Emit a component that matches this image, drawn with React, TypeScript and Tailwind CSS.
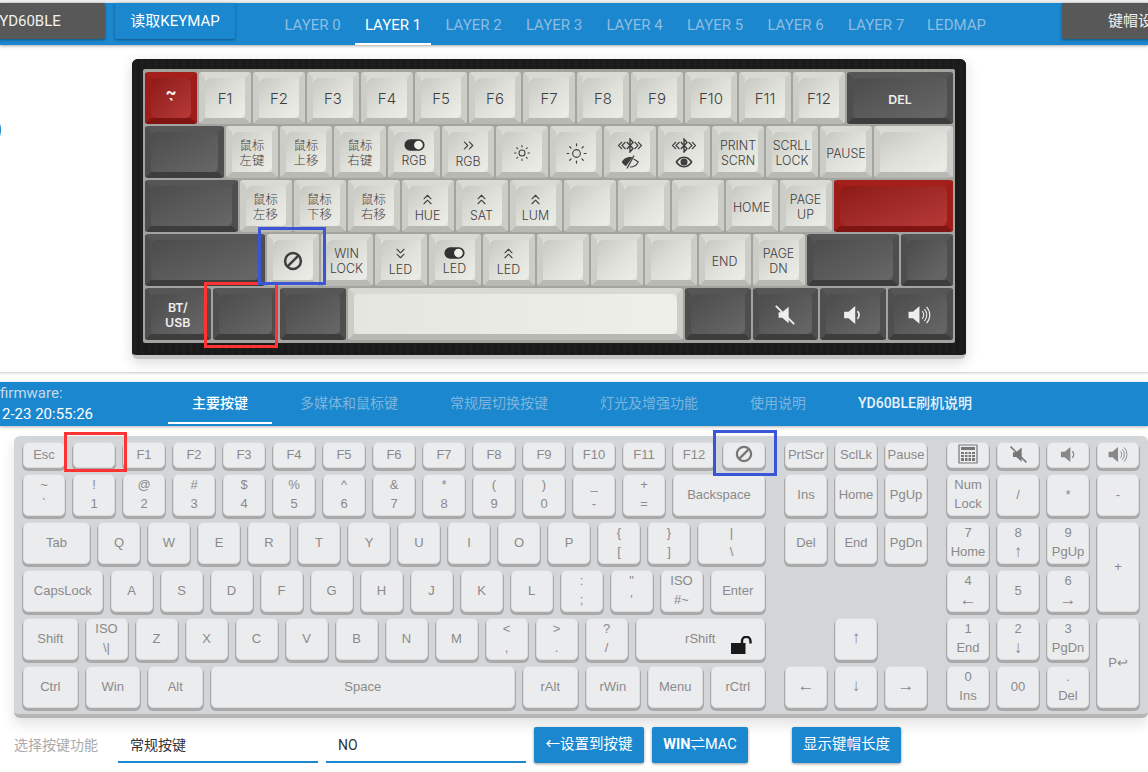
import { ChevronsDown, ChevronsRight, ChevronsUp, Sun } from "lucide-react"
import type { ReactNode } from "react"

const uiFont = "font-['Roboto','Noto_Sans_CJK_SC',sans-serif]"

function BanIcon({ className }: { className: string }) {
  return (
    <svg viewBox="0 0 24 24" fill="none" stroke="currentColor" strokeWidth="3" className={className}>
      <circle cx="12" cy="12" r="9.5" />
      <path d="M5.5 18.5 18.5 5.5" />
    </svg>
  )
}

function ToggleIcon() {
  return (
    <svg viewBox="0 0 24 14" className="h-[14px] w-[21px]">
      <rect x="0.5" y="0.5" width="23" height="13" rx="6.5" fill="#333" />
      <circle cx="16.5" cy="7" r="5" fill="#f0f0ea" />
    </svg>
  )
}

function MuteIcon({ className }: { className: string }) {
  return (
    <svg viewBox="0 0 24 24" className={className} fill="currentColor">
      <path d="M5 9h4l7-6v18l-7-6H5z" />
      <path d="M2 2l20 20" stroke="currentColor" strokeWidth="2" />
    </svg>
  )
}

function VolDownIcon({ className }: { className: string }) {
  return (
    <svg viewBox="0 0 18 18" className={className} fill="currentColor">
      <path d="M1 6h4l6-5v16l-6-5H1z" />
      <path d="M13 5.500a5 5 0 0 1 0 7" fill="none" stroke="currentColor" strokeWidth="1.500" />
    </svg>
  )
}

function VolUpIcon({ className }: { className: string }) {
  return (
    <svg viewBox="0 0 22 18" className={className} fill="currentColor">
      <path d="M0.500 6h4l6-5v16l-6-5h-4z" />
      <g fill="none" stroke="currentColor" strokeWidth="1">
        <path d="M13 5.500a5 5 0 0 1 0 7" />
        <path d="M15 3.500a8 8 0 0 1 0 11" />
        <path d="M17 1.500a11 11 0 0 1 0 15" />
      </g>
    </svg>
  )
}

function UnlockIcon({ className }: { className: string }) {
  return (
    <svg viewBox="0 0 21 18" className={className}>
      <path d="M0 7h14.500v11H0z" fill="currentColor" />
      <path d="M11 7V5a4.200 4.200 0 0 1 8.500 0v2.500" fill="none" stroke="currentColor" strokeWidth="2.400" />
    </svg>
  )
}

function CalcIcon() {
  return (
    <svg viewBox="0 0 20 20" className="h-[20px] w-[20px]" fill="#777">
      <path d="M1 1h18v18H1z" fill="none" stroke="#777" strokeWidth="1.2" />
      <path d="M3 3h14v3H3z" />
      <path d="M3 8h3v2H3zM7 8h2.500v2H7zM10.500 8H13v2h-2.500zM14 8h3v2h-3zM3 11h3v2H3zM7 11h2.500v2H7zM10.500 11H13v2h-2.500zM14 11h3v2h-3zM3 14h3v3H3zM7 14h2.500v3H7zM10.500 14H13v3h-2.500zM14 14h3v3h-3z" />
    </svg>
  )
}

// bluetooth rune with double chevrons either side
function BtWaves() {
  return (
    <svg viewBox="0 0 26 15" className="h-[15px] w-[26px]" fill="none" stroke="currentColor" strokeWidth="1.100">
      <path d="M9.800 4 16 10.500 13 14V1L16 4.500 9.800 11" strokeWidth="1.400" />
      <path d="M5 4 1.500 7.500 5 11M8.500 4 5 7.500 8.500 11M17.500 4 21 7.500 17.500 11M21 4 24.500 7.500 21 11" />
    </svg>
  )
}

function EyeIcon() {
  return (
    <svg viewBox="0 0 18 12" className="h-[12px] w-[18px]" fill="currentColor">
      <path d="M9 0.500C4.800 0.500 1.800 3.500 0.500 6c1.300 2.500 4.300 5.500 8.500 5.500s7.200-3 8.500-5.500C16.200 3.500 13.200 0.500 9 0.500zm0 9.500C6.300 10 3.800 8.300 2.500 6 3.800 3.700 6.300 2 9 2s5.200 1.700 6.500 4c-1.300 2.300-3.800 4-6.500 4z" />
      <circle cx="9" cy="6" r="3.500" />
    </svg>
  )
}

function EyeOffIcon() {
  return (
    <svg viewBox="0 0 18 14" className="h-[14px] w-[18px]">
      <path d="M11.500 2.300C10.700 2.100 9.900 2 9 2 5 2 2 4.500 0.800 7 1.600 8.700 3 10.200 5 11.200z" fill="currentColor" />
      <path d="M12.500 4c2 1 3.500 1.900 4.700 3-1.200 2.500-4.200 5-8.200 5" fill="none" stroke="currentColor" strokeWidth="1.100" />
      <path d="M13 0.500 6 13.500" stroke="currentColor" strokeWidth="1.300" />
    </svg>
  )
}

type CapColor = "light" | "dark" | "red"

const capStyles: Record<CapColor, { outer: string; inner: string }> = {
  light: {
    outer: "border-t-[#dadad4] border-l-[#cdcdc7] border-r-[#cdcdc7] border-b-[#b9b9b3] bg-[#ddd] text-[#3f3f3f]",
    inner: "bg-gradient-to-br from-[#c8c8c2] via-[#e0e0da] to-[#eeeee8]",
  },
  dark: {
    outer: "border-t-[#565656] border-l-[#4e4e4e] border-r-[#4e4e4e] border-b-[#3d3d3d] bg-[#555] text-[#eee]",
    inner: "bg-gradient-to-br from-[#4c4c4c] to-[#686868]",
  },
  red: {
    outer: "border-t-[#a5201b] border-l-[#9e1d19] border-r-[#9e1d19] border-b-[#7f1512] bg-[#a01e1a] text-[#f4f4f4]",
    inner: "bg-gradient-to-br from-[#8e1a18] to-[#b53a38]",
  },
}

type Cap = { w: string; color?: CapColor; label?: ReactNode; overlay?: ReactNode; inner?: string }

function TopKey({ w, color = "light", label, overlay, inner }: Cap) {
  const s = capStyles[color]
  return (
    <div className={`relative h-[52px] ${w} shrink-0 rounded-[3px] border-[6px] border-solid ${s.outer}`}>
      <div className={`flex h-full w-full items-center justify-center rounded-[6px] pt-[2px] ${inner ?? s.inner}`}>
        <div className="whitespace-nowrap text-center font-['Inter','Noto_Sans_CJK_SC',sans-serif] text-[12.4px] leading-[15px] font-light">
          {label}
        </div>
      </div>
      {overlay}
    </div>
  )
}

const lbl = (a: string, b?: string) => (
  <>
    <div>{a}</div>
    {b && <div>{b}</div>}
  </>
)

const fn = (t: string) => <span className="text-[15px]">{t}</span>
const u1 = "w-[52px]"

const iconKey = (icon: ReactNode, t: string) => (
  <span className="flex flex-col items-center">
    {icon}
    {t}
  </span>
)
const up = <ChevronsUp className="h-[17px] w-[17px]" strokeWidth={1.5} />
const down = <ChevronsDown className="h-[17px] w-[17px]" strokeWidth={1.5} />

const topRows: Cap[][] = [
  [
    {
      w: u1,
      color: "red",
      label: (
        <span className="block text-[17px] leading-[13px] font-bold">
          <span className="block">~</span>
          <span className="block">`</span>
        </span>
      ),
    },
    ...["F1", "F2", "F3", "F4", "F5", "F6", "F7", "F8", "F9", "F10", "F11", "F12"].map((f) => ({ w: u1, label: fn(f) })),
    { w: "w-[106px]", color: "dark" as CapColor, label: <span className="font-semibold">DEL</span> },
  ],
  [
    { w: "w-[79px]", color: "dark" },
    { w: u1, label: lbl("鼠标", "左键") },
    { w: u1, label: lbl("鼠标", "上移") },
    { w: u1, label: lbl("鼠标", "右键") },
    { w: u1, label: <span className="flex flex-col items-center gap-[1px]"><ToggleIcon />RGB</span> },
    { w: u1, label: iconKey(<ChevronsRight className="h-[17px] w-[17px]" strokeWidth={1.5} />, "RGB") },
    { w: u1, label: <Sun className="h-[18px] w-[18px]" strokeWidth={1.4} /> },
    { w: u1, label: <Sun className="h-[23px] w-[23px]" strokeWidth={1.2} /> },
    { w: u1, label: <span className="flex flex-col items-center gap-[2px]"><BtWaves /><EyeOffIcon /></span> },
    { w: u1, label: <span className="flex flex-col items-center gap-[3px]"><BtWaves /><EyeIcon /></span> },
    { w: u1, label: lbl("PRINT", "SCRN") },
    { w: u1, label: lbl("SCRLL", "LOCK") },
    { w: u1, label: "PAUSE" },
    { w: "w-[79px]" },
  ],
  [
    { w: "w-[92.500px]", color: "dark" },
    { w: u1, label: lbl("鼠标", "左移") },
    { w: u1, label: lbl("鼠标", "下移") },
    { w: u1, label: lbl("鼠标", "右移") },
    { w: u1, label: iconKey(up, "HUE") },
    { w: u1, label: iconKey(up, "SAT") },
    { w: u1, label: iconKey(up, "LUM") },
    { w: u1 },
    { w: u1 },
    { w: u1 },
    { w: u1, label: "HOME" },
    { w: u1, label: lbl("PAGE", "UP") },
    { w: "w-[119.500px]", color: "red" },
  ],
  [
    { w: "w-[119.500px]", color: "dark" },
    {
      w: u1,
      label: <BanIcon className="h-[20px] w-[20px]" />,
      overlay: <div className="absolute -left-[14.500px] -top-[13px] z-20 h-[58px] w-[68px] border-[3px] border-[#3b55d8]" />,
    },
    { w: u1, label: lbl("WIN", "LOCK") },
    { w: u1, label: iconKey(down, "LED") },
    { w: u1, label: <span className="flex flex-col items-center gap-[1px]"><ToggleIcon />LED</span> },
    { w: u1, label: iconKey(up, "LED") },
    { w: u1 },
    { w: u1 },
    { w: u1 },
    { w: u1, label: "END" },
    { w: u1, label: lbl("PAGE", "DN") },
    { w: "w-[92.500px]", color: "dark" },
    { w: u1, color: "dark" },
  ],
  [
    { w: "w-[65.500px]", color: "dark", label: <span className="font-semibold">{lbl("BT/", "USB")}</span> },
    {
      w: "w-[65.500px]",
      color: "dark",
      overlay: <div className="absolute -left-[15px] -top-[12px] z-10 h-[66px] w-[74px] border-[3px] border-[#ff3333]" />,
    },
    { w: "w-[65.500px]", color: "dark" },
    { w: "w-[335.500px]", inner: "bg-gradient-to-r from-[#e6e6e0] to-[#efefe9]" },
    { w: "w-[65.500px]", color: "dark" },
    { w: "w-[65.500px]", color: "dark", label: <MuteIcon className="h-[22px] w-[22px]" /> },
    { w: "w-[65.500px]", color: "dark", label: <VolDownIcon className="h-[20px] w-[20px]" /> },
    { w: "w-[65.500px]", color: "dark", label: <VolUpIcon className="h-[20px] w-[24px]" /> },
  ],
]

type LowKey = { w?: string; h?: string; a?: ReactNode; b?: ReactNode; overlay?: ReactNode; extra?: string }

function LowerKey({ w = "w-[42px]", h = "h-[42px]", a, b, overlay, extra = "" }: LowKey) {
  return (
    <div
      className={`relative ${w} ${h} flex shrink-0 flex-col items-center justify-center rounded-[5px] border border-[#dcdcdc] bg-[#ebecee] pb-[2px] text-[13px] leading-[19px] text-[#8a8a8a] shadow-[0_2px_0_1px_#a9a9a9] ${extra}`}
    >
      {a !== undefined && <div>{a}</div>}
      {b !== undefined && <div>{b}</div>}
      {overlay}
    </div>
  )
}

const arrow = (t: string) => <span className="text-[17px]">{t}</span>

const symbols = [
  ["~", "`"], ["!", "1"], ["@", "2"], ["#", "3"], ["$", "4"], ["%", "5"], ["^", "6"], ["&", "7"], ["*", "8"], ["(", "9"], [")", "0"], ["_", "-"], ["+", "="],
]

const blueBtn = "rounded-[2px] bg-[#1a87cf] text-[14.500px] text-white shadow-[0_1px_3px_rgba(0,0,0,0.4)]"

function App() {
  return (
    <div className={`h-[772px] w-[1148px] overflow-hidden bg-white ${uiFont}`}>
      <div className="h-[3px] bg-[#eeeeee]" />
      <header className="flex h-[42px] items-start justify-between bg-[#1a87cf] shadow-[0_1px_3px_rgba(0,0,0,0.35)]">
        <div className="flex items-start">
          <button className="-ml-[45px] h-[36px] w-[150px] rounded-[2px] bg-[#585858] text-center text-[15px] leading-[36px] text-[#f0f0f0] shadow-[0_1px_3px_rgba(0,0,0,0.4)]">
            YD60BLE
          </button>
          <button className="ml-[10px] h-[36px] w-[120px] rounded-[2px] bg-[#1a87cf] text-[15px] leading-[36px] text-white shadow-[0_1px_3px_rgba(0,0,0,0.4)]">
            读取KEYMAP
          </button>
          <nav className="ml-[39.500px] flex gap-[4.500px]">
            {["LAYER 0", "LAYER 1", "LAYER 2", "LAYER 3", "LAYER 4", "LAYER 5", "LAYER 6", "LAYER 7", "LEDMAP"].map((t) => (
              <div
                key={t}
                className={
                  t === "LAYER 1"
                    ? "h-[42px] w-[76px] border-b-2 border-white pt-[13px] text-center text-[15px] leading-[18px] text-white"
                    : "h-[42px] w-[76px] pt-[13px] text-center text-[15px] leading-[18px] text-[#8dbde0]"
                }
              >
                {t}
              </div>
            ))}
          </nav>
        </div>
        <button className="-mr-[20px] h-[36px] w-[106px] shrink-0 rounded-[2px] bg-[#585858] pl-[46px] text-left text-[15px] leading-[36px] whitespace-nowrap text-[#f0f0f0] shadow-[0_1px_3px_rgba(0,0,0,0.4)]">
          键帽设置
        </button>
      </header>

      <main className="relative h-[328px] border-b border-[#d9d9d9] pl-[132px] pt-[14px] shadow-[0_1px_2px_rgba(0,0,0,0.1)]">
        <div className="absolute -left-[39px] top-[65px] h-[40px] w-[40px] rounded-full border-[3px] border-[#1a87cf]" />
        <div className="h-[300px] w-[834px] rounded-[6px] border-b-[4px] border-[#c4c4c4] bg-[#1b1b1b] bg-[repeating-linear-gradient(90deg,#1a1a1a_0px,#1f1f1f_3px,#181818_7px)] pt-[10px] pl-[11px] shadow-[0_4px_14px_rgba(0,0,0,0.15)]">
          <div className="flex h-[274px] w-[812px] flex-col gap-[2px] rounded-[2px] bg-[#a3a3a0] py-[3px] pl-[2px]">
            {topRows.map((row, i) => (
              <div key={i} className="flex gap-[2px]">
                {row.map((k, j) => (
                  <TopKey key={j} {...k} />
                ))}
              </div>
            ))}
          </div>
        </div>
      </main>

      <section className="mt-[9px] flex h-[44px] bg-[#1a87cf] shadow-[0_1px_3px_rgba(0,0,0,0.3)]">
        <div className="-ml-[68px] w-[236px] pt-[1px] text-[15px] leading-[21px]">
          <div className="pl-[68px] text-[#c4d8e6]">firmware:</div>
          <div className="whitespace-nowrap pl-[70px] text-white">2-23 20:55:26</div>
        </div>
        <div className="flex gap-[4px] text-[14px]">
          {["主要按键", "多媒体和鼠标键", "常规层切换按键", "灯光及增强功能", "使用说明", "YD60BLE刷机说明"].map((t, i) => (
            <div
              key={t}
              className={
                i === 0
                  ? "h-[42px] border-b-2 border-white px-[24px] leading-[42px] font-medium text-white"
                  : i === 5
                    ? "h-[42px] px-[24px] leading-[42px] font-medium text-[#e8f2fa]"
                    : "h-[42px] px-[24px] leading-[42px] text-[#7fb5dc]"
              }
            >
              {t}
            </div>
          ))}
        </div>
      </section>

      <section className="ml-[14px] mt-[10px] flex h-[282px] w-[1134px] gap-[20px] rounded-[6px] border-b-[4px] border-[#b5b5b5] bg-[#d3d6d9] pl-[9px] pt-[6px] font-['Liberation_Sans',sans-serif] shadow-[0_6px_14px_rgba(0,0,0,0.12)]">
        <div className="flex w-[742px] flex-col gap-[6px]">
          <div className="flex gap-[8px]">
            <LowerKey h="h-[26px]" a="Esc" />
            <LowerKey
              h="h-[26px]"
              overlay={<div className="absolute -left-[10px] -top-[11px] z-10 h-[40px] w-[63px] border-[3px] border-[#ff3333]" />}
            />
            {["F1", "F2", "F3", "F4", "F5", "F6", "F7", "F8", "F9", "F10", "F11", "F12"].map((f) => (
              <LowerKey key={f} h="h-[26px]" a={f} />
            ))}
            <LowerKey
              h="h-[26px]"
              a={<BanIcon className="h-[18px] w-[18px] text-[#777]" />}
              overlay={<div className="absolute -left-[11px] -top-[13px] z-10 h-[46px] w-[64px] border-[3px] border-[#3b55d8]" />}
            />
          </div>
          <div className="flex gap-[8px]">
            {symbols.map(([a, b]) => (
              <LowerKey key={b} a={a} b={b} />
            ))}
            <LowerKey w="w-[92px]" a="Backspace" />
          </div>
          <div className="flex gap-[8px]">
            <LowerKey w="w-[67px]" a="Tab" />
            {["Q", "W", "E", "R", "T", "Y", "U", "I", "O", "P"].map((k) => (
              <LowerKey key={k} a={k} />
            ))}
            <LowerKey a="{" b="[" />
            <LowerKey a="}" b="]" />
            <LowerKey w="w-[67px]" a="|" b="\" />
          </div>
          <div className="flex gap-[8px]">
            <LowerKey w="w-[79.500px]" a="CapsLock" />
            {["A", "S", "D", "F", "G", "H", "J", "K", "L"].map((k) => (
              <LowerKey key={k} a={k} />
            ))}
            <LowerKey a=":" b=";" />
            <LowerKey a={'"'} b="'" />
            <LowerKey a="ISO" b="#~" />
            <LowerKey w="w-[54.500px]" a="Enter" />
          </div>
          <div className="flex gap-[8px]">
            <LowerKey w="w-[54.500px]" a="Shift" />
            <LowerKey a="ISO" b="\|" />
            {["Z", "X", "C", "V", "B", "N", "M"].map((k) => (
              <LowerKey key={k} a={k} />
            ))}
            <LowerKey a="<" b="," />
            <LowerKey a=">" b="." />
            <LowerKey a="?" b="/" />
            <LowerKey
              w="w-[129.500px]"
              a="rShift"
              overlay={<UnlockIcon className="absolute right-[12px] top-[17px] h-[18px] w-[21px] text-[#1a1a1a]" />}
            />
          </div>
          <div className="flex gap-[8px]">
            <LowerKey w="w-[54.500px]" a="Ctrl" />
            <LowerKey w="w-[54.500px]" a="Win" />
            <LowerKey w="w-[54.500px]" a="Alt" />
            <LowerKey w="w-[304.500px]" a="Space" />
            <LowerKey w="w-[54.500px]" a="rAlt" />
            <LowerKey w="w-[54.500px]" a="rWin" />
            <LowerKey w="w-[54.500px]" a="Menu" />
            <LowerKey w="w-[54.500px]" a="rCtrl" />
          </div>
        </div>

        <div className="grid w-[142px] grid-cols-[42px_42px_42px] grid-rows-[26px_42px_42px_42px_42px_42px] gap-x-[8px] gap-y-[6px]">
          <LowerKey h="h-[26px]" a="PrtScr" />
          <LowerKey h="h-[26px]" a="SclLk" />
          <LowerKey h="h-[26px]" a="Pause" />
          <LowerKey a="Ins" />
          <LowerKey a="Home" />
          <LowerKey a="PgUp" />
          <LowerKey a="Del" />
          <LowerKey a="End" />
          <LowerKey a="PgDn" />
          <LowerKey extra="col-start-2 row-start-5" a={arrow("↑")} />
          <LowerKey extra="col-start-1 row-start-6" a={arrow("←")} />
          <LowerKey extra="col-start-2 row-start-6" a={arrow("↓")} />
          <LowerKey extra="col-start-3 row-start-6" a={arrow("→")} />
        </div>

        <div className="grid w-[192px] grid-cols-[42px_42px_42px_42px] grid-rows-[26px_42px_42px_42px_42px_42px] gap-x-[8px] gap-y-[6px]">
          <LowerKey h="h-[26px]" a={<CalcIcon />} />
          <LowerKey h="h-[26px]" a={<MuteIcon className="h-[19px] w-[19px] text-[#777]" />} />
          <LowerKey h="h-[26px]" a={<VolDownIcon className="h-[17px] w-[17px] text-[#888]" />} />
          <LowerKey h="h-[26px]" a={<VolUpIcon className="h-[17px] w-[21px] text-[#888]" />} />
          <LowerKey a="Num" b="Lock" />
          <LowerKey a="/" />
          <LowerKey a="*" />
          <LowerKey a="-" />
          <LowerKey a="7" b="Home" />
          <LowerKey a="8" b={arrow("↑")} />
          <LowerKey a="9" b="PgUp" />
          <LowerKey h="h-[90px]" extra="row-span-2" a="+" />
          <LowerKey a="4" b={arrow("←")} />
          <LowerKey a="5" b=" " />
          <LowerKey a="6" b={arrow("→")} />
          <LowerKey a="1" b="End" />
          <LowerKey a="2" b={arrow("↓")} />
          <LowerKey a="3" b="PgDn" />
          <LowerKey h="h-[90px]" extra="row-span-2" a="P↩" />
          <LowerKey a="0" b="Ins" />
          <LowerKey a="00" b=" " />
          <LowerKey a="." b="Del" />
        </div>
      </section>

      <footer className="ml-[14px] mt-[9px] flex h-[36px] items-stretch text-[14px] leading-[36px]">
        <div className="w-[104px] text-[#aaaaaa]">选择按键功能</div>
        <div className="w-[200px] border-b-2 border-[#1a87cf] pl-[12px] text-[#333]">常规按键</div>
        <div className="ml-[8px] w-[200px] border-b-2 border-[#1a87cf] pl-[12px] text-[#333]">NO</div>
        <button className={`ml-[8px] w-[110px] ${blueBtn}`}>←设置到按键</button>
        <button className={`ml-[8px] w-[96px] ${blueBtn}`}>
          <span className="font-bold">WIN</span>⇌MAC
        </button>
        <button className={`ml-[44px] w-[109px] ${blueBtn}`}>显示键帽长度</button>
      </footer>
    </div>
  )
}

export default App
